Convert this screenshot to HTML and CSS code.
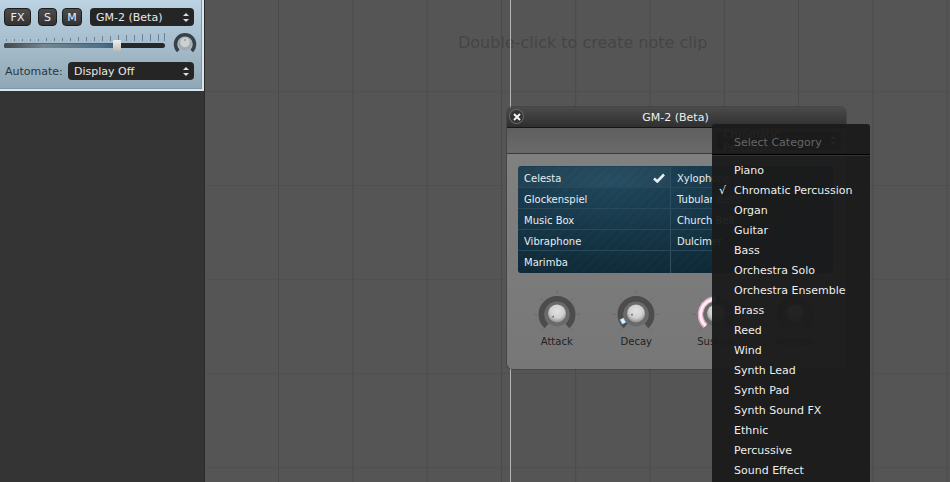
FILE: index.html
```html
<!DOCTYPE html>
<html lang="en">
<head>
<meta charset="utf-8">
<title>GM-2 (Beta)</title>
<link rel="stylesheet" href="styles.css">
</head>
<body>
<div class="app">
  <aside class="sidebar">
    <section class="track">
      <div class="track-row top">
        <button class="btn fx">FX</button>
        <button class="btn s">S</button>
        <button class="btn m">M</button>
        <div class="select inst"><span>GM-2 (Beta)</span><i class="arrows"></i></div>
      </div>
      <div class="track-row mid">
        <div class="slider">
          <svg class="ticks" width="162" height="8" viewBox="0 0 162 8">
            <path d="M2.5 6V8M10.5 6V8M18.5 6V8M26.5 6V8M34.5 6V8M42.5 5V8M50.5 5V8M58.5 5V8M66.5 5V8M74.5 4V8M82.5 4V8M90.5 4V8M98.5 3V8M106.5 3V8M114.5 2V8M122.5 2V8M130.5 2V8M138.5 1V8M146.5 1V8M154.5 1V8M160.5 0V8" stroke="#6b8192" stroke-width="1" fill="none"/>
          </svg>
          <div class="rail"><div class="rail-fill"></div><div class="thumb"></div></div>
        </div>
        <svg class="knob-small" width="24" height="22" viewBox="0 0 24 22">
          <path d="M5.3 19A9.5 9.5 0 1 1 18.7 19" fill="none" stroke="#3a4144" stroke-width="3.5"/>
          <circle cx="12" cy="12" r="6.5" fill="#a3a9ac"/>
          <circle cx="12" cy="10.5" r="4.8" fill="#cdd1d3"/>
          <circle cx="12" cy="8" r=".8" fill="#777"/>
        </svg>
      </div>
      <div class="track-row bot">
        <label class="auto">Automate:</label>
        <div class="select disp"><span>Display Off</span><i class="arrows"></i></div>
      </div>
    </section>
  </aside>
  <main class="canvas">
    <p class="hint">Double-click to create note clip</p>
    <div class="playhead"></div>

    <section class="plugin">
      <header class="title">
        <span class="close"><svg width="8" height="8" viewBox="0 0 8 8"><path d="M1 1L7 7M7 1L1 7" stroke="#f2f2f2" stroke-width="2"/></svg></span>
        <span class="title-text">GM-2 (Beta)</span>
      </header>
      <div class="toolbar">
        <div class="select cat"><span>Chromatic Percussion</span><i class="arrows"></i></div>
      </div>
      <div class="body">
        <div class="patches">
          <ul class="col first">
            <li class="on">Celesta<svg class="tick" width="12" height="10" viewBox="0 0 12 10"><path d="M1 5.5L4.3 8.5L11 1.5" stroke="#e8edf0" stroke-width="2.6" fill="none"/></svg></li>
            <li>Glockenspiel</li>
            <li>Music Box</li>
            <li>Vibraphone</li>
            <li>Marimba</li>
          </ul>
          <ul class="col">
            <li>Xylophone</li>
            <li>Tubular Bells</li>
            <li>Church Bell</li>
            <li>Dulcimer</li>
            <li></li>
          </ul>
        </div>
        <div class="knobs">
          <figure class="knob">
            <svg width="48" height="44" viewBox="0 0 48 44">
              <defs>
                <radialGradient id="cap" cx=".5" cy=".35" r=".65">
                  <stop offset="0" stop-color="#e2e2e2"/>
                  <stop offset=".6" stop-color="#cfcfcf"/>
                  <stop offset="1" stop-color="#8e8e8e"/>
                </radialGradient>
              </defs>
              <path class="ktick" d="M24 1V4M7.7 8.2L9.9 10.4M40.3 8.2L38.1 10.4M1 24.5H4M47 24.5H44M7.7 40.8L9.9 38.6M40.3 40.8L38.1 38.6"/>
              <path class="karc" d="M13.6 36A15.5 15.5 0 1 1 34.4 36"/>
              <circle cx="24" cy="24" r="12.5" fill="#6a6a6a"/>
              <circle cx="24" cy="23.5" r="9" fill="url(#cap)"/>
              <circle cx="20.2" cy="26.7" r=".9" fill="#666"/>
            </svg>
            <figcaption>Attack</figcaption>
          </figure>
          <figure class="knob">
            <svg width="48" height="44" viewBox="0 0 48 44">
              <path class="ktick" d="M24 1V4M7.7 8.2L9.9 10.4M40.3 8.2L38.1 10.4M1 24.5H4M47 24.5H44M7.7 40.8L9.9 38.6M40.3 40.8L38.1 38.6"/>
              <path class="karc" d="M13.6 36A15.5 15.5 0 1 1 34.4 36"/>
              <path d="M9.7 28.5L12.2 33.5" stroke="#7fb2dc" stroke-width="5" fill="none"/>
              <path d="M9.9 29L12 33" stroke="#e4f1fb" stroke-width="3" fill="none"/>
              <circle cx="24" cy="24" r="12.5" fill="#6a6a6a"/>
              <circle cx="24" cy="23.5" r="9" fill="url(#cap)"/>
              <circle cx="20" cy="24.7" r=".9" fill="#666"/>
            </svg>
            <figcaption>Decay</figcaption>
          </figure>
          <figure class="knob">
            <svg width="48" height="44" viewBox="0 0 48 44">
              <path class="ktick" d="M24 1V4M7.7 8.2L9.9 10.4M40.3 8.2L38.1 10.4M1 24.5H4M47 24.5H44M7.7 40.8L9.9 38.6M40.3 40.8L38.1 38.6"/>
              <path class="karc" d="M13.6 36A15.5 15.5 0 1 1 34.4 36"/>
              <path d="M13.6 36A15.5 15.5 0 0 1 24 9" fill="none" stroke="#e3a9c8" stroke-width="6"/>
              <path d="M13.6 36A15.5 15.5 0 0 1 24 9" fill="none" stroke="#fbeff6" stroke-width="3"/>
              <circle cx="24" cy="24" r="12.5" fill="#6a6a6a"/>
              <circle cx="24" cy="23.5" r="9" fill="url(#cap)"/>
            </svg>
            <figcaption>Sustain</figcaption>
          </figure>
          <figure class="knob">
            <svg width="48" height="44" viewBox="0 0 48 44">
              <path class="ktick" d="M24 1V4M7.7 8.2L9.9 10.4M40.3 8.2L38.1 10.4M1 24.5H4M47 24.5H44M7.7 40.8L9.9 38.6M40.3 40.8L38.1 38.6"/>
              <path class="karc" d="M13.6 36A15.5 15.5 0 1 1 34.4 36"/>
              <circle cx="24" cy="24" r="12.5" fill="#6a6a6a"/>
              <circle cx="24" cy="23.5" r="9" fill="url(#cap)"/>
            </svg>
            <figcaption>Release</figcaption>
          </figure>
        </div>
      </div>
    </section>

    <nav class="menu">
      <div class="menu-head">Select Category</div>
      <ul class="menu-list">
        <li>Piano</li>
        <li class="checked">Chromatic Percussion</li>
        <li>Organ</li>
        <li>Guitar</li>
        <li>Bass</li>
        <li>Orchestra Solo</li>
        <li>Orchestra Ensemble</li>
        <li>Brass</li>
        <li>Reed</li>
        <li>Wind</li>
        <li>Synth Lead</li>
        <li>Synth Pad</li>
        <li>Synth Sound FX</li>
        <li>Ethnic</li>
        <li>Percussive</li>
        <li>Sound Effect</li>
      </ul>
    </nav>
  </main>
</div>
</body>
</html>
```
FILE: styles.css
```css
* { box-sizing: border-box; }
html, body { margin: 0; height: 100%; overflow: hidden; }
body { font-family: "DejaVu Sans", sans-serif; font-size: 11px; background: #333; }
ul { list-style: none; margin: 0; padding: 0; }
figure { margin: 0; }
.app { display: flex; width: 950px; height: 482px; overflow: hidden; }
.sidebar { width: 205px; flex: none; background: #343434; border-right: 1px solid #2a2a2a; }
.track {
  width: 204px; height: 91px; padding: 8px 8px 0 4px;
  background: linear-gradient(#bcd3e3, #8fa6b5);
  border: 2px solid #dbe6ec; border-top: 0; border-left: 0;
  box-shadow: inset 0 -1px 0 #7f97a6, inset -1px 0 0 #7f97a6;
}
.track-row { display: flex; align-items: center; }
.top { height: 18px; }
.btn {
  flex: none; height: 18px; padding: 0; border: 1px solid #1d1d1d; border-radius: 4px;
  background: linear-gradient(#4c4c4c, #333);
  color: #eee; font: 11px "DejaVu Sans", sans-serif;
}
.fx { width: 27px; margin-right: 7px; }
.s { width: 19px; margin-right: 5px; }
.m { width: 20px; margin-right: 8px; }
.select {
  display: flex; align-items: center; justify-content: space-between;
  height: 18px; background: #252525; border-radius: 4px; color: #e8e8e8;
  padding: 0 5px 0 6px;
}
.inst { flex: 1; }
.disp { width: 126px; }
.arrows { position: relative; flex: none; width: 6px; height: 9px; }
.arrows::before, .arrows::after {
  content: ""; position: absolute; left: 0;
  border-left: 3px solid transparent; border-right: 3px solid transparent;
}
.arrows::before { top: 0; border-bottom: 3px solid #ddd; }
.arrows::after { bottom: 0; border-top: 3px solid #ddd; }
.mid { height: 22px; margin-top: 6px; align-items: flex-start; }
.slider { flex: none; width: 161px; margin-top: 1px; margin-right: 8px; }
.ticks { display: block; }
.rail { position: relative; height: 5px; margin-top: 2px; background: #24282a; border-radius: 3px; }
.rail-fill {
  width: 113px; height: 5px; border-radius: 3px 0 0 3px;
  background: linear-gradient(90deg, #42474a, #74868f 35%, #4f7188 85%, #3c6078);
  box-shadow: inset 0 1px 0 rgba(50,90,120,.6);
}
.thumb {
  position: absolute; left: 109px; top: -3px; width: 8px; height: 11px;
  background: linear-gradient(#f0f0ee, #bdbdb8); border-radius: 1px;
}
.knob-small { flex: none; }
.bot { height: 18px; margin-top: 8px; justify-content: space-between; }
.auto { padding-left: 1px; color: #2b3640; }
.canvas {
  position: relative; flex: 1; overflow: hidden; background-color: #555;
  background-image:
    linear-gradient(90deg, #4a4a4a 1px, transparent 1px),
    linear-gradient(#505050 1px, transparent 1px);
  background-size: 74.3px 100%, 100% 94px;
  background-position: 73px 0, 0 91px;
}
.hint {
  position: absolute; left: 253px; top: 33px; margin: 0;
  font-size: 16px; line-height: 19px; color: #454545;
}
.playhead { position: absolute; left: 305px; top: 0; bottom: 0; width: 1px; background: #b5b5b5; }
.plugin {
  position: absolute; left: 302px; top: 107px; width: 339px; height: 262px;
  border-radius: 6px; overflow: hidden; box-shadow: 0 0 0 1px rgba(60,60,60,.6);
  display: flex; flex-direction: column;
}
.title {
  position: relative; flex: none; height: 21px; padding-right: 2px;
  background: linear-gradient(#4b4b4b, #2f2f2f);
  display: flex; align-items: center; justify-content: center;
  border-bottom: 1px solid #161616; color: #eee;
}
.close {
  position: absolute; left: 3px; top: 3px; width: 13px; height: 13px; border-radius: 50%;
  background: #333; box-shadow: 0 0 0 1px #666; display: flex; align-items: center; justify-content: center;
}
.toolbar {
  flex: none; height: 26px; padding-right: 5px;
  display: flex; align-items: center; justify-content: flex-end;
  background: linear-gradient(#5f5f5f, #6a6a6a); border-bottom: 1px solid #3b3b3b;
}
.cat { width: 124px; }
.body { flex: 1; background: linear-gradient(#808080, #777); padding: 12px 11px 0; }
.patches {
  display: flex; height: 107px; width: 315px; padding-top: 1px; border-radius: 3px;
  background:
    repeating-linear-gradient(135deg, rgba(255,255,255,.012) 0 3px, transparent 3px 7px),
    radial-gradient(ellipse at 30% 15%, #1f465c, #12303f 55%, #0a1f2c);
  color: #e7edf1; font-size: 10px;
}
.col { width: 153px; }
.first { border-right: 1px solid #2f4e61; }
.col li {
  display: flex; align-items: center; justify-content: space-between;
  height: 21px; padding: 2px 5px 0 6px; border-bottom: 1px solid #2a4859;
}
.col li:last-child { border-bottom: 0; padding-top: 1px; }
.on { background: rgba(255,255,255,.04); }
.tick { flex: none; }
.knobs { display: flex; margin: 17px 0 0 -1px; width: 340px; }
.knob { width: 79.5px; flex: none; display: flex; flex-direction: column; align-items: center; }
.knob svg { display: block; }
.ktick { stroke: #6a6a6a; stroke-width: 1; fill: none; }
.karc { stroke: #4c4c4c; stroke-width: 6; fill: none; }
.knob figcaption { line-height: 15px; font-size: 10px; color: #222; white-space: nowrap; }
.menu {
  position: absolute; left: 507px; top: 124px; width: 158px; height: 370px;
  background: rgba(27,27,27,.96); border-radius: 3px; color: #eee;
}
.menu-head {
  height: 31px; padding: 11px 0 0 22px; line-height: 15px; color: #666;
  border-bottom: 1px solid #000; box-shadow: 0 1px 0 #333;
}
.menu-list { padding-top: 6px; }
.menu-list li { position: relative; height: 20px; line-height: 20px; padding-left: 22px; white-space: nowrap; }
.checked::before { content: "√"; position: absolute; left: 7px; top: 0; }
```
